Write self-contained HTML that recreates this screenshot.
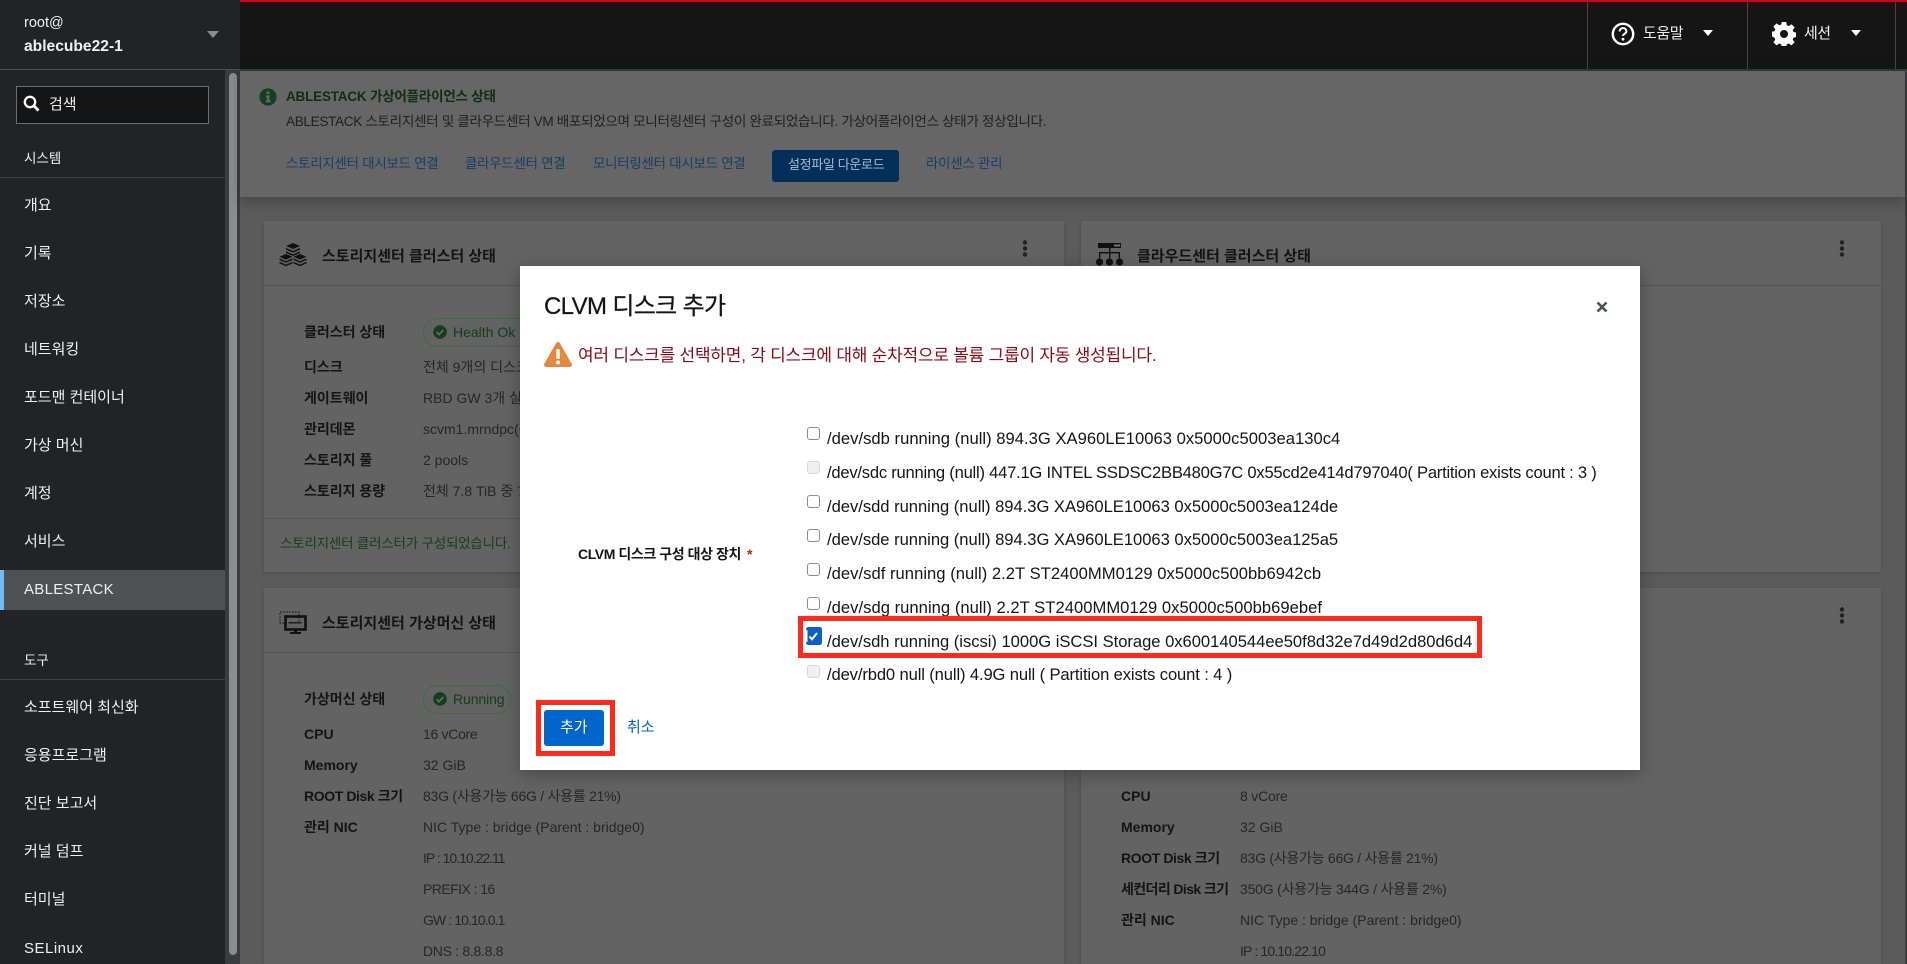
<!DOCTYPE html>
<html lang="ko"><head><meta charset="utf-8"><title>ABLESTACK</title>
<style>
*{box-sizing:border-box}
html,body{margin:0;padding:0;width:1907px;height:964px;overflow:hidden;background:#5b5b5b;font-family:"Liberation Sans","Noto Sans CJK KR",sans-serif}
.a,.t{position:absolute}
.t{white-space:nowrap;line-height:20px;height:20px}
.side{color:#f0f0f0;font-size:15px}
.lab{font-size:14px;font-weight:700;color:#141414}
.val{font-size:14px;color:#262626}
.ttl{font-size:15px;font-weight:700;color:#141414}
.lnk{font-size:13.4px;color:#133e68;letter-spacing:-.2px}
.card{position:absolute;background:#636363;box-shadow:0 1px 3px rgba(0,0,0,.18)}
.hr{position:absolute;height:1px;background:#555}
.dk{font-size:16.6px;color:#151515}
.cb{position:absolute;left:807px;width:13px;height:13px;background:#fff;border:1px solid #8a8d90;border-radius:3px}
.cb.d{background:#f0f0f0;border-color:#d8d8d8}
.pill{position:absolute;height:29px;border:1px solid #3f6b43;border-radius:15px;background:#636363}
.pilltx{font-size:14px;color:#113d18}
</style></head><body>

<!-- top bar -->
<div class="a" style="left:240px;top:0;width:1667px;height:71px;background:#151515"></div>
<div class="a" style="left:240px;top:0;width:1667px;height:12px;background:linear-gradient(#2a1013,#151515)"></div>
<div class="a" style="left:240px;top:0;width:1667px;height:2px;background:#d80016"></div>
<div class="a" style="left:240px;top:69px;width:1667px;height:2px;background:#22452a"></div>
<div class="a" style="left:1587px;top:0;width:1px;height:69px;background:#444"></div>
<div class="a" style="left:1747px;top:0;width:1px;height:69px;background:#444"></div>
<div class="a" style="left:1895px;top:0;width:1px;height:69px;background:#444"></div>
<svg class="a" style="left:1611px;top:22px" width="24" height="24" viewBox="0 0 24 24"><circle cx="12" cy="12" r="10.200" fill="none" stroke="#fff" stroke-width="2.400"/><path d="M8.600 9.400a3.400 3.400 0 0 1 6.800 0c0 2.300-3.400 2.400-3.400 4.600" fill="none" stroke="#fff" stroke-width="2"/><circle cx="12" cy="17.200" r="1.400" fill="#fff"/></svg>
<div class="t" style="left:1643px;top:24px;font-size:15px;color:#f0f0f0;letter-spacing:-.4px">도움말</div>
<svg class="a" style="left:1703px;top:30px" width="10" height="7"><path d="M0 0h10L5 6z" fill="#fff"/></svg>
<svg class="a" style="left:1772px;top:22px" width="24" height="24" viewBox="0 0 24 24"><path fill="#fff" fill-rule="evenodd" d="M9.800 0h4.400l.6 3.300 1.900.8 2.800-1.900 3.100 3.100-1.900 2.800.8 1.900 3.300.6v4.400l-3.300.6-.8 1.900 1.900 2.800-3.100 3.100-2.800-1.900-1.900.8-.6 3.300H9.800l-.6-3.300-1.900-.8-2.800 1.900-3.100-3.100 1.900-2.800-.8-1.900L-.8 14.200V9.800l3.300-.6.8-1.900-1.900-2.800 3.100-3.100 2.800 1.900 1.900-.8zM12 8a4 4 0 1 0 0 8 4 4 0 0 0 0-8z"/></svg>
<div class="t" style="left:1804px;top:24px;font-size:15px;color:#f0f0f0;letter-spacing:-.6px">세션</div>
<svg class="a" style="left:1851px;top:30px" width="10" height="7"><path d="M0 0h10L5 6z" fill="#fff"/></svg>

<!-- sidebar -->
<div class="a" style="left:0;top:0;width:240px;height:964px;background:#212427"></div>
<div class="a" style="left:0;top:69px;width:240px;height:1px;background:#4a4d50"></div>
<div class="a" style="left:225px;top:70px;width:15px;height:894px;background:#3a3d40"></div>
<div class="a" style="left:229px;top:73px;width:8px;height:882px;background:#8a8d90;border-radius:4px"></div>
<div class="t side" style="left:24px;top:13px;font-size:14.5px">root@</div>
<div class="t side" style="left:24px;top:37px;font-weight:700;font-size:15.6px">ablecube22-1</div>
<svg class="a" style="left:207px;top:31px" width="12" height="7"><path d="M0 0h12L6 7z" fill="#8a8d90"/></svg>
<div class="a" style="left:16px;top:86px;width:193px;height:38px;background:#151515;border:1px solid #6a6e73"></div>
<svg class="a" style="left:23px;top:95px" width="17" height="17" viewBox="0 0 17 17"><circle cx="7" cy="7" r="5.200" fill="none" stroke="#fff" stroke-width="2.300"/><path d="M10.800 10.800L15.500 15.500" stroke="#fff" stroke-width="2.800"/></svg>
<div class="t side" style="left:49px;top:95px">검색</div>
<div class="t side" style="left:24px;top:149px;font-size:13.5px">시스템</div>
<div class="a" style="left:0;top:177px;width:225px;height:1px;background:#3f4245"></div>
<div class="t side" style="left:24px;top:196px">개요</div>
<div class="t side" style="left:24px;top:244px">기록</div>
<div class="t side" style="left:24px;top:292px">저장소</div>
<div class="t side" style="left:24px;top:340px">네트워킹</div>
<div class="t side" style="left:24px;top:388px">포드맨 컨테이너</div>
<div class="t side" style="left:24px;top:436px">가상 머신</div>
<div class="t side" style="left:24px;top:484px">계정</div>
<div class="t side" style="left:24px;top:532px">서비스</div>
<div class="a" style="left:0;top:570px;width:225px;height:40px;background:#4f5255"></div>
<div class="a" style="left:0;top:570px;width:4px;height:40px;background:#73bcf7"></div>
<div class="t side" style="left:24px;top:580px;letter-spacing:.3px">ABLESTACK</div>
<div class="t side" style="left:24px;top:651px;font-size:13.5px">도구</div>
<div class="a" style="left:0;top:679px;width:225px;height:1px;background:#3f4245"></div>
<div class="t side" style="left:24px;top:698px">소프트웨어 최신화</div>
<div class="t side" style="left:24px;top:746px">응용프로그램</div>
<div class="t side" style="left:24px;top:794px">진단 보고서</div>
<div class="t side" style="left:24px;top:842px">커널 덤프</div>
<div class="t side" style="left:24px;top:890px">터미널</div>
<div class="t side" style="left:24px;top:939px;letter-spacing:.5px">SELinux</div>

<!-- main backdrop -->
<div class="a" style="left:240px;top:71px;width:1665px;height:893px;background:#5b5b5b"></div>
<div class="a" style="left:1905px;top:71px;width:2px;height:893px;background:#3c3c3c"></div>
<div class="a" style="left:240px;top:71px;width:1665px;height:126px;background:#666;box-shadow:0 4px 12px rgba(0,0,0,.25)"></div>
<svg class="a" style="left:259px;top:88px" width="18" height="18" viewBox="0 0 18 18"><circle cx="9" cy="9" r="8.600" fill="#123f1c"/><rect x="7.600" y="3.400" width="2.800" height="2.800" fill="#666"/><path d="M6.800 7.400h3.600v5.200h1.200v1.800H6.800v-1.800h1.100V9.200H6.800z" fill="#666"/></svg>
<div class="t" style="left:286px;top:87px;font-size:13.5px;font-weight:700;color:#0d2f14;letter-spacing:-.2px">ABLESTACK 가상어플라이언스 상태</div>
<div class="t" style="left:286px;top:112px;font-size:13.6px;color:#202020;letter-spacing:-.35px">ABLESTACK 스토리지센터 및 클라우드센터 VM 배포되었으며 모니터링센터 구성이 완료되었습니다. 가상어플라이언스 상태가 정상입니다.</div>
<div class="t lnk" style="left:286px;top:154px">스토리지센터 대시보드 연결</div>
<div class="t lnk" style="left:465px;top:154px">클라우드센터 연결</div>
<div class="t lnk" style="left:593px;top:154px">모니터링센터 대시보드 연결</div>
<div class="a" style="left:772px;top:150px;width:127px;height:32px;background:#02305a;border-radius:3px"></div>
<div class="t" style="left:788px;top:155px;font-size:13px;color:#a9bccd;letter-spacing:-.33px">설정파일 다운로드</div>
<div class="t lnk" style="left:926px;top:154px">라이센스 관리</div>

<!-- card 1 -->
<div class="card" style="left:264px;top:221px;width:800px;height:351px"></div>
<svg class="a" style="left:279px;top:242px" width="28" height="26" viewBox="0 0 28 26" fill="#111"><path d="M14 1l7 3-7 3-7-3z"/><path d="M7 6l7 3 7-3v1.600l-7 3-7-3zM7 9.400l7 3 7-3V11l-7 3-7-3z"/><path d="M7 12l6.500 2.800-6.500 2.800L.5 14.800z"/><path d="M.5 16.400l6.500 2.800 6.500-2.800V18l-6.500 2.800L.5 18zM.5 19.800l6.500 2.800 6.500-2.800v1.600L7 24.200.5 21.400z"/><path d="M21 12l6.500 2.800-6.500 2.800-6.500-2.800z"/><path d="M14.500 16.400l6.500 2.800 6.500-2.800V18L21 20.800 14.500 18zM14.500 19.800l6.500 2.800 6.500-2.800v1.600L21 24.200l-6.500-2.800z"/></svg>
<div class="t ttl" style="left:322px;top:247px">스토리지센터 클러스터 상태</div>
<svg class="a" style="left:1022px;top:240px" width="6" height="17"><circle cx="3" cy="2.500" r="2.200" fill="#222"/><circle cx="3" cy="8.500" r="2.200" fill="#222"/><circle cx="3" cy="14.500" r="2.200" fill="#222"/></svg>
<div class="hr" style="left:264px;top:285px;width:800px"></div>
<div class="t lab" style="left:304px;top:322px">클러스터 상태</div>
<div class="pill" style="left:423px;top:318px;width:150px"></div>
<svg class="a" style="left:433px;top:325px" width="14" height="14" viewBox="0 0 14 14"><circle cx="7" cy="7" r="6.800" fill="#123f1c"/><path d="M3.600 7.200l2.400 2.400 4.400-4.600" stroke="#666" stroke-width="1.800" fill="none"/></svg>
<div class="t pilltx" style="left:453px;top:322px">Health Ok</div>
<div class="t lab" style="left:304px;top:357px">디스크</div><div class="t val" style="left:423px;top:357px">전체 9개의 디스크</div>
<div class="t lab" style="left:304px;top:388px">게이트웨이</div><div class="t val" style="left:423px;top:388px">RBD GW 3개 실행</div>
<div class="t lab" style="left:304px;top:419px">관리데몬</div><div class="t val" style="left:423px;top:419px">scvm1.mrndpc(관리)</div>
<div class="t lab" style="left:304px;top:450px">스토리지 풀</div><div class="t val" style="left:423px;top:450px">2 pools</div>
<div class="t lab" style="left:304px;top:481px">스토리지 용량</div><div class="t val" style="left:423px;top:481px">전체 7.8 TiB 중 7</div>
<div class="hr" style="left:264px;top:518px;width:800px"></div>
<div class="t" style="left:280px;top:534px;font-size:13.5px;color:#124018;letter-spacing:-.2px">스토리지센터 클러스터가 구성되었습니다.</div>

<!-- card 2 -->
<div class="card" style="left:264px;top:588px;width:800px;height:376px"></div>
<svg class="a" style="left:279px;top:611px" width="28" height="24" viewBox="0 0 28 24"><rect x="1" y="1" width="19" height="11" fill="none" stroke="#111" stroke-width="1" stroke-dasharray="1.600 1.400"/><rect x="6.500" y="5.500" width="20" height="13" fill="none" stroke="#111" stroke-width="2.600"/><rect x="10" y="11" width="13" height="1.400" fill="#111" opacity=".8"/><path d="M15 19h3v2h4v2h-11v-2h4z" fill="#111"/></svg>
<div class="t ttl" style="left:322px;top:614px">스토리지센터 가상머신 상태</div>
<div class="hr" style="left:264px;top:652px;width:800px"></div>
<div class="t lab" style="left:304px;top:689px">가상머신 상태</div>
<div class="pill" style="left:423px;top:685px;width:88px"></div>
<svg class="a" style="left:433px;top:692px" width="14" height="14" viewBox="0 0 14 14"><circle cx="7" cy="7" r="6.800" fill="#123f1c"/><path d="M3.600 7.200l2.400 2.400 4.400-4.600" stroke="#666" stroke-width="1.800" fill="none"/></svg>
<div class="t pilltx" style="left:453px;top:689px;letter-spacing:-.1px">Running</div>
<div class="t lab" style="left:304px;top:724px">CPU</div><div class="t val" style="left:423px;top:724px;letter-spacing:-.3px">16 vCore</div>
<div class="t lab" style="left:304px;top:755px">Memory</div><div class="t val" style="left:423px;top:755px">32 GiB</div>
<div class="t lab" style="left:304px;top:786px;letter-spacing:-.4px">ROOT Disk 크기</div><div class="t val" style="left:423px;top:786px;letter-spacing:-.25px">83G (사용가능 66G / 사용률 21%)</div>
<div class="t lab" style="left:304px;top:817px">관리 NIC</div><div class="t val" style="left:423px;top:817px">NIC Type : bridge (Parent : bridge0)</div>
<div class="t val" style="left:423px;top:848px;letter-spacing:-1px">IP : 10.10.22.11</div>
<div class="t val" style="left:423px;top:879px;letter-spacing:-.55px">PREFIX : 16</div>
<div class="t val" style="left:423px;top:910px;letter-spacing:-.9px">GW : 10.10.0.1</div>
<div class="t val" style="left:423px;top:941px;letter-spacing:-.3px">DNS : 8.8.8.8</div>

<!-- right card 1 -->
<div class="card" style="left:1081px;top:221px;width:800px;height:351px"></div>
<svg class="a" style="left:1096px;top:243px" width="27" height="23" viewBox="0 0 27 23" fill="#111"><rect x="2" y="0" width="23" height="5"/><rect x="18" y="1.500" width="6" height="2" fill="#777"/><path d="M13 5h1.400v4H24v6h-1.400v-4.600h-8.200V15H13v-4.600H4.400V15H3V9h10z"/><circle cx="3.500" cy="19" r="3.600"/><circle cx="13.500" cy="19" r="3.600"/><circle cx="23.500" cy="19" r="3.600"/></svg>
<div class="t ttl" style="left:1137px;top:247px">클라우드센터 클러스터 상태</div>
<svg class="a" style="left:1839px;top:240px" width="6" height="17"><circle cx="3" cy="2.500" r="2.200" fill="#222"/><circle cx="3" cy="8.500" r="2.200" fill="#222"/><circle cx="3" cy="14.500" r="2.200" fill="#222"/></svg>
<div class="hr" style="left:1081px;top:285px;width:800px"></div>

<!-- right card 2 -->
<div class="card" style="left:1081px;top:588px;width:800px;height:376px"></div>
<svg class="a" style="left:1839px;top:607px" width="6" height="17"><circle cx="3" cy="2.500" r="2.200" fill="#222"/><circle cx="3" cy="8.500" r="2.200" fill="#222"/><circle cx="3" cy="14.500" r="2.200" fill="#222"/></svg>
<div class="t lab" style="left:1121px;top:786px">CPU</div><div class="t val" style="left:1240px;top:786px;letter-spacing:-.2px">8 vCore</div>
<div class="t lab" style="left:1121px;top:817px">Memory</div><div class="t val" style="left:1240px;top:817px">32 GiB</div>
<div class="t lab" style="left:1121px;top:848px;letter-spacing:-.4px">ROOT Disk 크기</div><div class="t val" style="left:1240px;top:848px;letter-spacing:-.25px">83G (사용가능 66G / 사용률 21%)</div>
<div class="t lab" style="left:1121px;top:879px;letter-spacing:-.6px">세컨더리 Disk 크기</div><div class="t val" style="left:1240px;top:879px;letter-spacing:-.2px">350G (사용가능 344G / 사용률 2%)</div>
<div class="t lab" style="left:1121px;top:910px">관리 NIC</div><div class="t val" style="left:1240px;top:910px">NIC Type : bridge (Parent : bridge0)</div>
<div class="t val" style="left:1240px;top:941px;letter-spacing:-.85px">IP : 10.10.22.10</div>

<!-- modal -->
<div class="a" style="left:520px;top:266px;width:1120px;height:504px;background:#fff;box-shadow:0 4px 16px rgba(0,0,0,.28)"></div>
<div class="t" style="left:544px;top:297px;font-size:24px;color:#151515;letter-spacing:-.65px;-webkit-text-stroke:.25px #151515">CLVM 디스크 추가</div>
<svg class="a" style="left:1596px;top:301px" width="12" height="12" viewBox="0 0 12 12"><path d="M1.500 1.500l9 9M10.500 1.500l-9 9" stroke="#4f5255" stroke-width="2.600"/></svg>
<svg class="a" style="left:544px;top:342px" width="28" height="25" viewBox="0 0 28 25"><path d="M14 0c.9 0 1.500.4 2 1.300l11.700 20.600c.8 1.500-.1 3.100-1.800 3.100H2.100C.4 25-.5 23.400.3 21.900L12 1.300C12.500.4 13.100 0 14 0z" fill="#e5883e"/><rect x="12.300" y="7" width="3.400" height="10" rx="1" fill="#fff"/><circle cx="14" cy="20.500" r="2" fill="#fff"/></svg>
<div class="t" style="left:578px;top:346px;font-size:17px;color:#8b0a12;letter-spacing:-.22px">여러 디스크를 선택하면, 각 디스크에 대해 순차적으로 볼륨 그룹이 자동 생성됩니다.</div>

<div class="t" style="left:578px;top:544px;font-size:14px;font-weight:700;color:#151515;letter-spacing:-.42px">CLVM 디스크 구성 대상 장치</div>
<div class="t" style="left:747px;top:544px;font-size:14px;font-weight:700;color:#c9190b">*</div>

<div class="cb" style="top:427px"></div>
<div class="t dk" style="left:827px;top:429px;letter-spacing:.02px">/dev/sdb running (null) 894.3G XA960LE10063 0x5000c5003ea130c4</div>
<div class="cb d" style="top:461px"></div>
<div class="t dk" style="left:827px;top:463px;letter-spacing:-.24px">/dev/sdc running (null) 447.1G INTEL SSDSC2BB480G7C 0x55cd2e414d797040( Partition exists count : 3 )</div>
<div class="cb" style="top:495px"></div>
<div class="t dk" style="left:827px;top:497px;letter-spacing:-.03px">/dev/sdd running (null) 894.3G XA960LE10063 0x5000c5003ea124de</div>
<div class="cb" style="top:529px"></div>
<div class="t dk" style="left:827px;top:530px;letter-spacing:-.03px">/dev/sde running (null) 894.3G XA960LE10063 0x5000c5003ea125a5</div>
<div class="cb" style="top:563px"></div>
<div class="t dk" style="left:827px;top:564px;letter-spacing:.03px">/dev/sdf running (null) 2.2T ST2400MM0129 0x5000c500bb6942cb</div>
<div class="cb" style="top:597px"></div>
<div class="t dk" style="left:827px;top:598px;letter-spacing:.03px">/dev/sdg running (null) 2.2T ST2400MM0129 0x5000c500bb69ebef</div>
<div class="a" style="left:798px;top:616px;width:684px;height:42px;border:5px solid #ff2a1a"></div>
<svg class="a" style="left:806px;top:627px" width="16" height="18" viewBox="0 0 16 18"><rect width="16" height="18" rx="2.500" fill="#0b5fc6"/><rect x="0" y="3" width="13" height="12" fill="#fff"/><rect x="1.500" y="3" width="11.500" height="12" fill="#0b5fc6"/><path d="M3.500 9.500l2.500 2.800 5-6.300" stroke="#fff" stroke-width="2" fill="none"/></svg>
<div class="t dk" style="left:827px;top:632px;letter-spacing:-.03px">/dev/sdh running (iscsi) 1000G iSCSI Storage 0x600140544ee50f8d32e7d49d2d80d6d4</div>
<div class="cb d" style="top:665px"></div>
<div class="t dk" style="left:827px;top:665px;letter-spacing:-.13px">/dev/rbd0 null (null) 4.9G null ( Partition exists count : 4 )</div>

<div class="a" style="left:536px;top:700px;width:79px;height:56px;border:5px solid #ff2a1a"></div>
<div class="a" style="left:544px;top:710px;width:60px;height:36px;background:#06c;border-radius:3px"></div>
<div class="t" style="left:560px;top:718px;font-size:15px;color:#fff">추가</div>
<div class="t" style="left:627px;top:718px;font-size:15px;color:#06c">취소</div>
</body></html>
